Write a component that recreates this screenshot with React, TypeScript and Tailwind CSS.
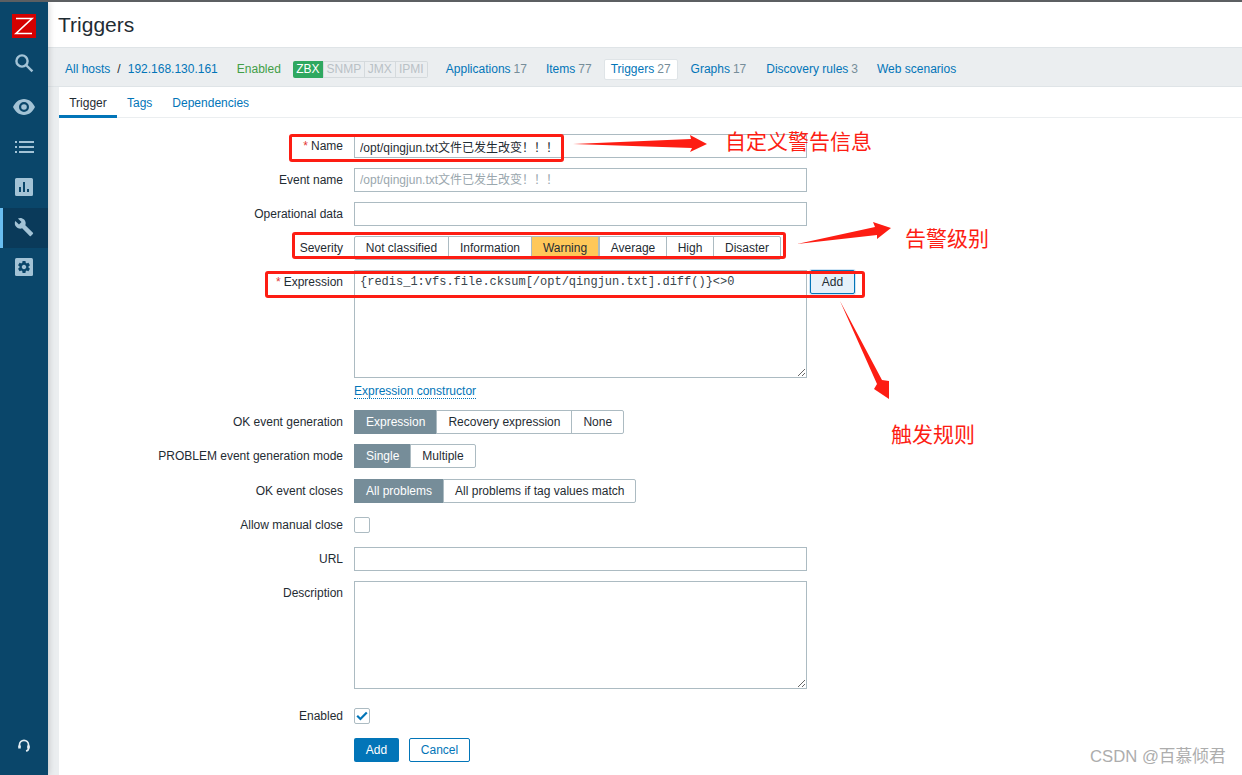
import React from 'react';

const SANS = "font-['Liberation_Sans','Noto_Sans_CJK_SC',sans-serif]";

const SideIcon = ({ children, active }: { children: React.ReactNode; active?: boolean }) => (
  <div className={`h-10 pb-[2px] flex items-center justify-center border-l-[3px] pr-[3px] ${active ? 'bg-[#0a3a5a] border-[#69bdf0]' : 'border-transparent'}`}>
    {children}
  </div>
);

const Sidebar = () => (
  <aside className="relative z-10 w-12 shrink-0 bg-[#0a466a] flex flex-col text-[#a3c3d6] shadow-[0_0_7px_rgba(0,0,0,0.22)]">
    <div className="h-[36px] flex items-end justify-center">
      <div className="w-6 h-6 bg-[#d40000]">
        <svg width="24" height="24" viewBox="0 0 24 24" fill="none" stroke="#fff" strokeWidth="1.6">
          <path d="M4 4.500h16L4 19.500h16" />
        </svg>
      </div>
    </div>
    <div className="h-[38px] mt-[6px] mb-[6px] flex items-center justify-center">
      <svg width="20" height="20" viewBox="0 0 20 20" fill="none" stroke="currentColor" strokeWidth="2.4">
        <circle cx="8" cy="8" r="5.6" />
        <path d="M12 12l6.4 6.4" />
      </svg>
    </div>
    <SideIcon>
      <svg width="22" height="16" viewBox="0 0 22 16" fill="currentColor">
        <path fillRule="evenodd" d="M11 0c5 0 9 3.6 11 8-2 4.4-6 8-11 8S2 12.400 0 8c2-4.400 6-8 11-8zm0 3a5 5 0 100 10 5 5 0 000-10zm0 2.200a2.800 2.800 0 110 5.600 2.800 2.800 0 010-5.600z" />
      </svg>
    </SideIcon>
    <SideIcon>
      <svg width="19" height="12" viewBox="0 0 19 12" fill="currentColor">
        <path d="M0 0h2v2H0zM4 0h15v2H4zM0 5h2v2H0zM4 5h15v2H4zM0 10h2v2H0zM4 10h15v2H4z" />
      </svg>
    </SideIcon>
    <SideIcon>
      <svg width="18" height="18" viewBox="0 0 18 18" fill="currentColor">
        <path fillRule="evenodd" d="M1.500 0h15A1.500 1.500 0 0118 1.500v15a1.500 1.500 0 01-1.500 1.500h-15A1.500 1.500 0 010 16.500v-15A1.500 1.500 0 011.500 0zM4 9v5h2V9zm4-5v10h2V4zm4 7v3h2v-3z" />
      </svg>
    </SideIcon>
    <SideIcon active>
      <svg width="20" height="20" viewBox="0 0 24 24" fill="currentColor">
        <path d="M22.7 19l-9.100-9.100c.9-2.300.4-5-1.500-6.900-2-2-5-2.400-7.400-1.300L9 6 6 9 1.600 4.700C.4 7.100.9 10.100 2.900 12.100c1.900 1.900 4.600 2.400 6.900 1.500l9.100 9.100c.4.400 1 .4 1.400 0l2.300-2.300c.5-.4.5-1.100.1-1.400z" />
      </svg>
    </SideIcon>
    <SideIcon>
      <svg width="18" height="18" viewBox="0 0 18 18">
        <rect width="18" height="18" rx="1.500" fill="currentColor" />
        <g transform="translate(1.500 1.500) scale(0.625)">
          <path
            fill="#0a466a"
            d="M19.140 12.940c.04-.3.06-.61.06-.94 0-.32-.02-.64-.07-.94l2.030-1.580c.18-.14.23-.41.12-.61l-1.920-3.320c-.12-.22-.37-.29-.59-.22l-2.390.96c-.5-.38-1.030-.7-1.620-.94l-.36-2.540c-.04-.24-.24-.41-.48-.41h-3.840c-.24 0-.43.17-.47.41l-.36 2.540c-.59.24-1.130.57-1.620.94l-2.390-.96c-.22-.08-.47 0-.59.22L2.740 8.870c-.12.21-.08.47.12.61l2.030 1.580c-.05.3-.09.63-.09.94s.02.64.07.94l-2.030 1.580c-.18.14-.23.41-.12.61l1.920 3.320c.12.22.37.29.59.22l2.390-.96c.5.38 1.030.7 1.620.94l.36 2.540c.05.24.24.41.48.41h3.840c.24 0 .44-.17.47-.41l.36-2.540c.59-.24 1.130-.56 1.620-.94l2.390.96c.22.08.47 0 .59-.22l1.920-3.320c.12-.22.07-.47-.12-.61l-2.010-1.580zM12 15.600c-1.980 0-3.600-1.620-3.600-3.600s1.620-3.600 3.600-3.600 3.600 1.620 3.600 3.600-1.620 3.600-3.600 3.600z"
          />
        </g>
      </svg>
    </SideIcon>
    <div className="mt-auto h-[36px] flex items-start justify-center">
      <svg width="12" height="13" viewBox="0 0 12 13" fill="none" stroke="#e3edf3" strokeWidth="1.700">
        <path d="M1.500 8V5.800a4.500 4.500 0 019 0V8" />
        <path d="M10.500 8v1.500c0 1.300-1 2.200-2.500 2.500" />
        <path d="M1.500 6.500V9.500M10.500 6.500V9.500" strokeWidth="2.600" />
      </svg>
    </div>
  </aside>
);

const NavLink = ({ label, count, active, className = '' }: { label: string; count?: number; active?: boolean; className?: string }) => (
  <span className={`${active ? 'h-[21px] px-[6px] bg-white border border-[#dfe4e7] rounded-[2px]' : ''} inline-flex items-center text-[#0275b8] ${className}`}>
    {label}
    {count !== undefined && <span className="text-[#768d99] ml-[3px]">{count}</span>}
  </span>
);

const HostNav = () => (
  <div className="h-10 shrink-0 bg-[#ebeef0] border-y border-[#dfe4e7] flex items-center text-[12px] pl-[17px] pt-[4px]">
    <span className="text-[#0275b8]">All hosts</span>
    <span className="text-[#1f2c33] ml-[7px]">/</span>
    <span className="text-[#0275b8] ml-[7px]">192.168.130.161</span>
    <span className="text-[#429e47] ml-[19px]">Enabled</span>
    <div className="flex items-center ml-[12px] h-[17px] text-[12px]">
      <span className="h-full w-[30px] bg-[#2fa860] text-white flex items-center justify-center rounded-l-[2px]">ZBX</span>
      <span className="h-full w-[42px] border border-[#d5dadd] text-[#b9c1c6] flex items-center justify-center">SNMP</span>
      <span className="h-full w-[31px] border-y border-r border-[#d5dadd] text-[#b9c1c6] flex items-center justify-center">JMX</span>
      <span className="h-full w-[32px] border-y border-r border-[#d5dadd] text-[#b9c1c6] flex items-center justify-center rounded-r-[2px]">IPMI</span>
    </div>
    <NavLink label="Applications" count={17} className="ml-[18px]" />
    <NavLink label="Items" count={77} className="ml-[19px]" />
    <NavLink label="Triggers" count={27} active className="ml-[12px]" />
    <NavLink label="Graphs" count={17} className="ml-[13px]" />
    <NavLink label="Discovery rules" count={3} className="ml-[20px]" />
    <NavLink label="Web scenarios" className="ml-[19px]" />
  </div>
);

const Row = ({ label, required, children, className = '' }: { label: string; required?: boolean; children: React.ReactNode; className?: string }) => (
  <div className={`flex gap-[11px] ${className}`}>
    <div className="w-[284px] shrink-0 h-6 flex items-center justify-end text-[#1f2c33]">
      {required && <span className="text-[#e33734] mr-[3px]">*</span>}
      {label}
    </div>
    <div className="flex-1 min-w-0">{children}</div>
  </div>
);

const inputCls = "block w-[453px] h-6 px-[5px] bg-white border border-[#acbbc2] text-[12px] text-[#1f2c33] outline-none";

const Seg = ({ items, active, warn, widths }: { items: string[]; active: string; warn?: boolean; widths?: string[] }) => (
  <div className="inline-flex h-6 border border-[#acbbc2] rounded-[2px]">
    {items.map((item, i) => {
      const isActive = item === active;
      const size = widths ? widths[i] : isActive ? 'pl-[12px] pr-[11px]' : 'px-[11px]';
      return (
        <span
          key={item}
          className={`${size} flex items-center justify-center ${i > 0 ? 'border-l border-[#acbbc2]' : ''} ${
            isActive
              ? warn
                ? 'bg-[#ffc859] text-[#1f2c33] -my-px h-6 border border-[#7a8b94]'
                : 'bg-[#768d99] text-white -my-px -ml-px h-6'
              : 'text-[#1f2c33]'
          }`}
        >
          {item}
        </span>
      );
    })}
  </div>
);

const Box = ({ checked }: { checked?: boolean }) => (
  <div className="h-6 flex items-center">
    <div className="w-4 h-4 bg-white border border-[#acbbc2] rounded-[2px] flex items-center justify-center">
      {checked && (
        <svg width="12" height="10" viewBox="0 0 12 10" fill="none" stroke="#0275b8" strokeWidth="2.200">
          <path d="M1.200 4.800l3.200 3.200 6.400-6.600" />
        </svg>
      )}
    </div>
  </div>
);

const Annotations = () => (
  <>
    <div className="absolute z-20 left-[289px] top-[134px] w-[275px] h-[28px] border-[3px] border-[#fd1d13] rounded-[3px]" />
    <div className="absolute z-20 left-[292px] top-[232px] w-[494px] h-[27px] border-[3px] border-[#fd1d13] rounded-[3px]" />
    <div className="absolute z-20 left-[265px] top-[271px] w-[600px] h-[27px] border-[3px] border-[#fd1d13] rounded-[3px]" />
    <svg className="absolute z-20 left-0 top-0 pointer-events-none" width="1242" height="775">
      <polygon fill="#fd1d13" points="573,144 691,139 690,135 707,144 690,152 692,148" />
      <polygon fill="#fd1d13" points="797,244 875,227 873,222 891,228 877,239 877,235" />
      <polygon fill="#fd1d13" points="840,301 882,380 889,381 889,399 874,389 877,384" />
    </svg>
    <div className="absolute z-20 left-[725px] top-[128px] text-[21px] leading-[28px] text-[#fd1d13]">自定义警告信息</div>
    <div className="absolute z-20 left-[905px] top-[225px] text-[21px] leading-[28px] text-[#fd1d13]">告警级别</div>
    <div className="absolute z-20 left-[891px] top-[421px] text-[21px] leading-[28px] text-[#fd1d13]">触发规则</div>
    <div className="absolute z-20 left-[1090px] top-[746px] text-[16.700px] leading-[22px] text-[#adadad]">CSDN @百慕倾君</div>
  </>
);

export default function App() {
  return (
    <div className={`relative h-[775px] w-[1242px] overflow-hidden flex flex-col bg-white text-[12px] ${SANS}`}>
      <div className="relative z-20 h-[2px] shrink-0 bg-[#5c5f62]" />
      <div className="flex-1 flex min-h-0">
        <Sidebar />
        <main className="flex-1 flex flex-col min-w-0 bg-[#ebeef0]">
          <header className="h-[45px] shrink-0 bg-white flex items-center pl-[10px] text-[21px] text-[#1f2c33]">Triggers</header>
          <HostNav />
          <div className="flex-1 flex min-h-0 pl-[11px]">
            <div className="flex-1 bg-white min-w-0">
              <div className="h-[31px] flex border-b border-[#ebeef0] text-[12px]">
                <span className="w-[58px] pt-[4px] flex items-center justify-center text-[#1f2c33] border-b-[3px] border-[#0275b8] h-[31px]">Trigger</span>
                <span className="ml-[10px] pt-[1px] flex items-center text-[#0275b8]">Tags</span>
                <span className="ml-[20px] pt-[1px] flex items-center text-[#0275b8]">Dependencies</span>
              </div>
              <form className="pt-[16px] flex flex-col gap-[10px]">
                <Row label="Name" required>
                  <input readOnly className={inputCls} value="/opt/qingjun.txt文件已发生改变！！！" />
                </Row>
                <Row label="Event name">
                  <input readOnly className={`${inputCls} placeholder:text-[#9aa7ae]`} placeholder="/opt/qingjun.txt文件已发生改变！！！" />
                </Row>
                <Row label="Operational data">
                  <input readOnly className={inputCls} />
                </Row>
                <Row label="Severity">
                  <Seg
                    items={['Not classified', 'Information', 'Warning', 'Average', 'High', 'Disaster']}
                    active="Warning"
                    warn
                    widths={['w-[93px]', 'w-[83px]', 'w-[68px]', 'w-[67px]', 'w-[47px]', 'w-[67px]']}
                  />
                </Row>
                <Row label="Expression" required>
                  <div className="flex items-start gap-[3px]">
                    <textarea
                      readOnly
                      className="block w-[453px] h-[108px] px-[5px] py-[3px] bg-white border border-[#acbbc2] text-[12px] leading-[16px] text-[#3a464d] outline-none font-['Liberation_Mono',monospace]"
                      value="{redis_1:vfs.file.cksum[/opt/qingjun.txt].diff()}<>0"
                    />
                    <button type="button" className="w-[45px] h-6 bg-[#e5f1fa] border border-[#0275b8] rounded-[2px] text-[#1f2c33] shadow-[0_0_0_1px_#cfe5f5]">Add</button>
                  </div>
                  <div className="mt-[5px] h-[17px] flex items-center">
                    <span className="text-[#0275b8] border-b border-dotted border-[#0275b8] leading-[14px]">Expression constructor</span>
                  </div>
                </Row>
                <Row label="OK event generation">
                  <Seg items={['Expression', 'Recovery expression', 'None']} active="Expression" />
                </Row>
                <Row label="PROBLEM event generation mode">
                  <Seg items={['Single', 'Multiple']} active="Single" />
                </Row>
                <Row label="OK event closes" className="mt-[1px]">
                  <Seg items={['All problems', 'All problems if tag values match']} active="All problems" />
                </Row>
                <Row label="Allow manual close">
                  <Box />
                </Row>
                <Row label="URL">
                  <input readOnly className={inputCls} />
                </Row>
                <Row label="Description">
                  <textarea readOnly className="block w-[453px] h-[108px] bg-white border border-[#acbbc2] outline-none" />
                </Row>
                <Row label="Enabled" className="mt-[5px]">
                  <Box checked />
                </Row>
                <Row label="">
                  <div className="flex gap-[10px]">
                    <button type="button" className="w-[45px] h-6 bg-[#0275b8] rounded-[2px] text-white">Add</button>
                    <button type="button" className="w-[61px] h-6 bg-white border border-[#0275b8] rounded-[2px] text-[#0275b8]">Cancel</button>
                  </div>
                </Row>
              </form>
            </div>
          </div>
        </main>
      </div>
      <Annotations />
    </div>
  );
}
